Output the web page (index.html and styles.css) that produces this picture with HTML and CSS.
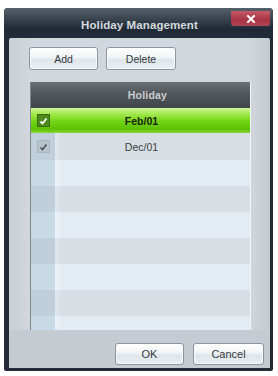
FILE: index.html
```html
<!DOCTYPE html>
<html>
<head>
<meta charset="utf-8">
<link rel="stylesheet" href="styles.css">
</head>
<body>
<div class="window">
  <div class="titlebar">
    <span class="title">Holiday Management</span>
    <span class="close">
      <svg width="10" height="8" viewBox="0 0 10 8"><path d="M2 1 L8 7 M8 1 L2 7" stroke="#fff" stroke-width="2" stroke-linecap="square"/></svg>
    </span>
  </div>
  <div class="content">
    <div class="toolbar">
      <button class="btn btn-add">Add</button>
      <button class="btn btn-del">Delete</button>
    </div>
    <div class="tablewrap">
      <div class="table">
        <div class="row head"><div class="chk"></div><div class="cell">Holiday</div></div>
        <div class="row sel"><div class="chk"><span class="box on"><svg width="9" height="8" viewBox="0 0 9 8"><path d="M1.5 4.5 L3.5 6.5 L7.5 1.5" stroke="#fff" stroke-width="1.8" fill="none"/></svg></span></div><div class="cell">Feb/01</div></div>
        <div class="row alt"><div class="chk"><span class="box off"><svg width="9" height="8" viewBox="0 0 9 8"><path d="M1.5 4.5 L3.5 6.5 L7.5 1.5" stroke="#4a4f55" stroke-width="1.6" fill="none"/></svg></span></div><div class="cell plain">Dec/01</div></div>
        <div class="row"><div class="chk"></div><div class="cell"></div></div>
        <div class="row alt"><div class="chk"></div><div class="cell"></div></div>
        <div class="row"><div class="chk"></div><div class="cell"></div></div>
        <div class="row alt"><div class="chk"></div><div class="cell"></div></div>
        <div class="row"><div class="chk"></div><div class="cell"></div></div>
        <div class="row alt"><div class="chk"></div><div class="cell"></div></div>
        <div class="row"><div class="chk"></div><div class="cell"></div></div>
      </div>
    </div>
    <div class="footer">
      <button class="btn btn-ok">OK</button>
      <button class="btn btn-cancel">Cancel</button>
    </div>
  </div>
</div>
</body>
</html>
```
FILE: styles.css
```css
html, body {
  margin: 0;
  padding: 0;
  background: #ffffff;
}
body {
  width: 278px;
  height: 376px;
  overflow: hidden;
  font-family: "Liberation Sans", Arial, sans-serif;
}
.window {
  margin: 8px 0 0 4px;
  width: 269px;
  height: 363px;
  background: #232c36;
  border-radius: 4px 4px 2px 2px;
  display: flex;
  flex-direction: column;
  box-sizing: border-box;
  padding: 0 3px 3px 5px;
}
.titlebar {
  height: 30px;
  flex: none;
  position: relative;
  display: flex;
  align-items: center;
  justify-content: center;
  background: linear-gradient(#56616b 0%, #3a4550 35%, #1f2a36 70%, #222d39 100%);
  margin: 0 -3px 0 -5px;
  border-radius: 4px 4px 0 0;
}
.title {
  color: #d5dade;
  font-weight: bold;
  font-size: 11.5px;
  letter-spacing: 0.1px;
  margin-top: 3px;
  margin-left: 2px;
}
.close {
  position: absolute;
  right: 3px;
  top: 3px;
  width: 39px;
  height: 15px;
  background: linear-gradient(#c65a66, #a83343 60%, #b14654);
  border-radius: 0 0 3px 3px;
  display: flex;
  align-items: center;
  justify-content: center;
}
.content {
  flex: 1;
  display: flex;
  flex-direction: column;
  background: linear-gradient(90deg, #c9d0d6 0%, #d1d7dc 8%, #d1d7dc 92%, #c4cacf 100%);
  border-radius: 2px 2px 0 0;
}
.toolbar {
  display: flex;
  gap: 8px;
  padding: 9px 0 0 20px;
  height: 23px;
}
.btn {
  font-family: "Liberation Sans", Arial, sans-serif;
  font-size: 10.5px;
  color: #333a40;
  border: 1px solid #8d969e;
  border-radius: 3px;
  background: linear-gradient(#ffffff 0%, #f0f4f6 45%, #dfe6ea 55%, #e9eef1 100%);
  padding: 0;
  box-shadow: inset 0 0 0 1px rgba(255,255,255,0.7);
}
.btn-add { width: 69px; height: 23px; }
.btn-del { width: 70px; height: 23px; }
.tablewrap {
  margin: 12px 0 0 21px;
  width: 221px;
  height: 248px;
  overflow: hidden;
  border-left: 1px solid #7c858c;
  border-right: 1px solid #f2f5f7;
  box-sizing: border-box;
}
.table {
  display: flex;
  flex-direction: column;
}
.row {
  height: 26px;
  display: flex;
  flex: none;
}
.chk {
  width: 24px;
  flex: none;
  background: #c7dae6;
  display: flex;
  align-items: center;
  justify-content: center;
}
.cell {
  flex: 1;
  background: linear-gradient(90deg, #eef3f8 0px, #e4ecf3 6px, #e4ecf3 100%);
  display: flex;
  align-items: center;
  justify-content: center;
  font-size: 10.5px;
  padding-right: 22px;
}
.row.alt .chk { background: #bfd0dc; }
.row.alt .cell { background: linear-gradient(90deg, #e2e8ee 0px, #d7dfe5 6px, #d7dfe5 100%); }
.row.head .chk,
.row.head .cell {
  background: linear-gradient(#6a6f73 0%, #54595d 40%, #404549 100%);
}
.row.head .cell {
  color: #c9cdd0;
  font-weight: bold;
  font-size: 10.5px;
  letter-spacing: 0.2px;
  padding-right: 10px;
}
.row.sel { height: 25px; }
.row.sel .chk,
.row.sel .cell {
  background: linear-gradient(#d2f79a 0%, #9fe84a 25%, #70d414 55%, #5cc200 85%, #8ad640 100%);
}
.row.sel .cell {
  font-weight: bold;
  color: #1c2410;
}
.cell.plain { color: #3a3f44; }
.box {
  width: 13px;
  height: 13px;
  display: flex;
  align-items: center;
  justify-content: center;
  box-sizing: border-box;
}
.box.on {
  background: #4f8a1c;
  border: 1px solid #3b6a10;
}
.box.off {
  background: #b7c4cc;
  border: 1px solid #aab6be;
}
.row.sel + .row { height: 27px; }
.footer {
  flex: 1;
  display: flex;
  justify-content: flex-end;
  align-items: flex-start;
  gap: 9px;
  padding: 13px 6px 0 0;
  background: #c4cbd1;
}
.btn-ok { width: 69px; height: 22px; font-size: 11px; }
.btn-cancel { width: 71px; height: 22px; font-size: 11px; }
```
